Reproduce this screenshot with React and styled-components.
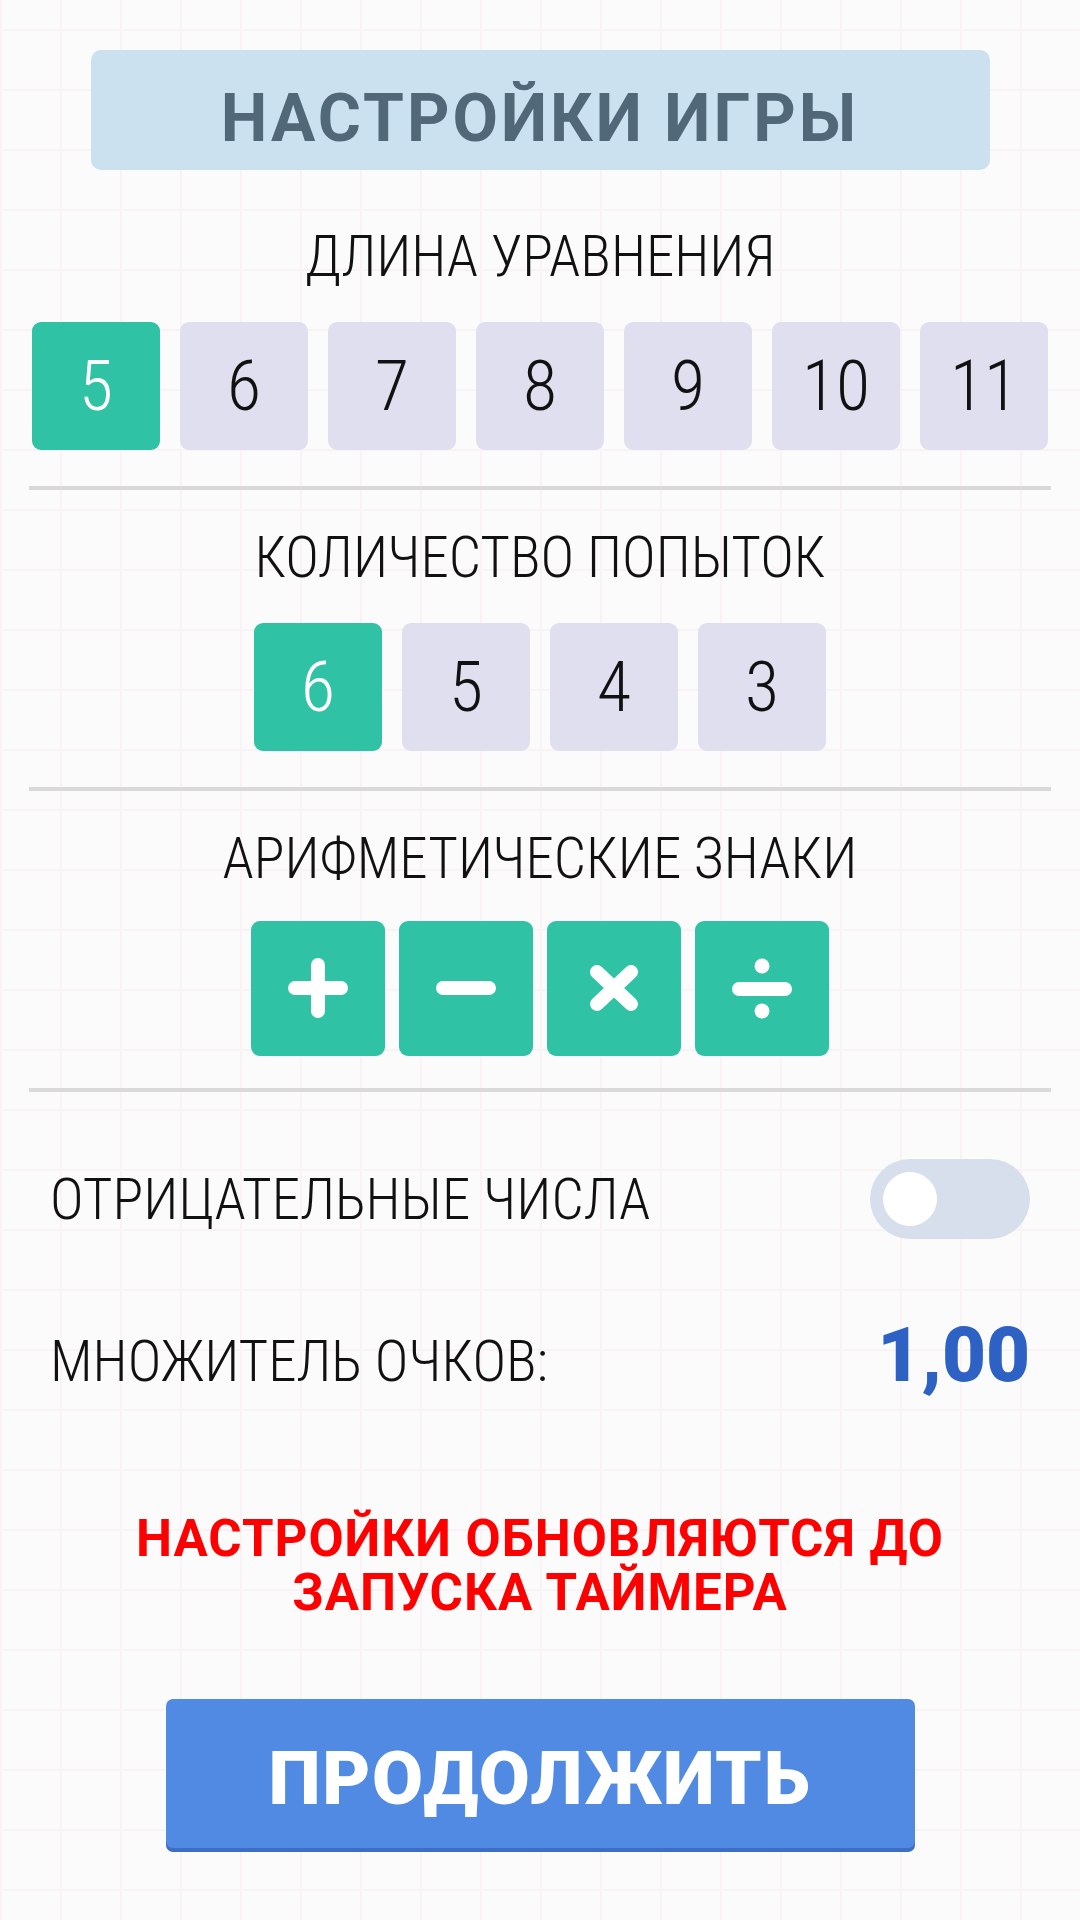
import React from "react";
import styled, { createGlobalStyle } from "styled-components";

const GlobalStyle = createGlobalStyle`
  html, body { margin: 0; padding: 0; }
  body {
    min-height: 1920px;
    background-color: #fcfbfc;
    background-image:
      linear-gradient(to right, #faf3f6 2px, transparent 2px),
      linear-gradient(to bottom, #faf3f6 2px, transparent 2px);
    background-size: 60px 60px;
    background-position: 0 0, 0 29px;
    font-family: "Roboto", "Noto Sans", sans-serif;
  }
`;

const Page = styled.div`
  width: 1080px;
  box-sizing: border-box;
  padding-top: 50px;
  display: flex;
  flex-direction: column;
`;

const TitleBox = styled.div`
  align-self: center;
  width: 899px;
  height: 120px;
  box-sizing: border-box;
  padding-top: 36px;
  background: #cbe1ef;
  border-radius: 10px;
  text-align: center;
  font-family: "Roboto", sans-serif;
  font-weight: 700;
  font-size: 66px;
  line-height: 66px;
  letter-spacing: 3px;
  color: #516879;
`;

const Section = styled.section`
  display: flex;
  flex-direction: column;
  align-items: center;
  padding-top: ${(p) => (p.$first ? "58px" : "39px")};
  padding-bottom: 30px;
`;

const Label = styled.div`
  font-family: "Roboto Condensed", "Roboto", sans-serif;
  font-stretch: 75%;
  font-weight: 300;
  font-size: 57px;
  line-height: 57px;
  color: #111;
  white-space: nowrap;
`;

const RowArea = styled.div`
  margin-top: 31px;
  height: 140px;
  display: flex;
  align-items: center;
  justify-content: center;
  gap: ${(p) => p.$gap}px;
`;

const NumButton = styled.button`
  width: 128px;
  height: 128px;
  border: none;
  padding: 0;
  border-radius: 9px;
  background: ${(p) => (p.$active ? "#30c2a5" : "#dfdff0")};
  color: ${(p) => (p.$active ? "#ffffff" : "#111")};
  font-family: "Roboto Condensed", "Roboto", sans-serif;
  font-stretch: 75%;
  font-weight: 300;
  font-size: 70px;
  line-height: 70px;
  display: flex;
  align-items: center;
  justify-content: center;
`;

const OpButton = styled.button`
  width: 134px;
  height: 135px;
  border: none;
  padding: 0;
  border-radius: 9px;
  background: #30c2a5;
  display: flex;
  align-items: center;
  justify-content: center;
`;

const Divider = styled.hr`
  margin: 0 29px;
  border: none;
  height: 4px;
  background: #d9d9d9;
`;

const SettingRow = styled.div`
  display: flex;
  justify-content: space-between;
  align-items: ${(p) => p.$align || "center"};
  padding: 0 50px 0 50px;
  margin-top: ${(p) => p.$mt}px;
`;

const Track = styled.div`
  width: 160px;
  height: 80px;
  box-sizing: border-box;
  border-radius: 40px;
  background: #d8dfec;
  display: flex;
  align-items: center;
  padding-left: 13px;
`;

const Knob = styled.div`
  width: 54px;
  height: 54px;
  border-radius: 50%;
  background: #ffffff;
`;

const Multiplier = styled.div`
  font-family: "Roboto", sans-serif;
  font-weight: 900;
  font-size: 76px;
  line-height: 76px;
  color: #2d62c4;
`;

const Warning = styled.div`
  margin-top: 119px;
  text-align: center;
  font-family: "Roboto", sans-serif;
  font-weight: 700;
  font-size: 51px;
  line-height: 54px;
  letter-spacing: 1px;
  color: #ff0000;
`;

const ContinueButton = styled.button`
  align-self: center;
  margin-top: 79px;
  width: 749px;
  height: 149px;
  border: none;
  border-radius: 7px;
  background: #508ae3;
  box-shadow: 0 4px 0 #3d6ec4;
  padding: 10px 0 0;
  display: flex;
  align-items: center;
  justify-content: center;
  font-family: "Roboto", sans-serif;
  font-weight: 900;
  font-size: 74px;
  line-height: 74px;
  letter-spacing: 1.5px;
  color: #ffffff;
`;

const Icon = ({ children }) => (
  <svg width="64" height="64" viewBox="0 0 64 64" fill="none" stroke="#fff" strokeWidth="14" strokeLinecap="round">
    {children}
  </svg>
);

const ops = [
  { key: "plus", el: (<><line x1="9" y1="32" x2="55" y2="32" /><line x1="32" y1="9" x2="32" y2="55" /></>) },
  { key: "minus", el: <line x1="9" y1="32" x2="55" y2="32" /> },
  { key: "times", el: (<><line x1="15" y1="16" x2="49" y2="48" /><line x1="49" y1="16" x2="15" y2="48" /></>) },
  {
    key: "div",
    el: (
      <>
        <line x1="9" y1="33" x2="55" y2="33" />
        <circle cx="32" cy="10" r="7.5" fill="#fff" stroke="none" />
        <circle cx="32" cy="55" r="7.5" fill="#fff" stroke="none" />
      </>
    ),
  },
];

export default function App() {
  const lengths = [5, 6, 7, 8, 9, 10, 11];
  const attempts = [6, 5, 4, 3];
  return (
    <Page>
      <GlobalStyle />
      <TitleBox>НАСТРОЙКИ ИГРЫ</TitleBox>

      <Section $first>
        <Label>ДЛИНА УРАВНЕНИЯ</Label>
        <RowArea $gap={20}>
          {lengths.map((n) => (
            <NumButton key={n} $active={n === 5}>{n}</NumButton>
          ))}
        </RowArea>
      </Section>
      <Divider />

      <Section>
        <Label>КОЛИЧЕСТВО ПОПЫТОК</Label>
        <RowArea $gap={20}>
          {attempts.map((n) => (
            <NumButton key={n} $active={n === 6}>{n}</NumButton>
          ))}
        </RowArea>
      </Section>
      <Divider />

      <Section>
        <Label>АРИФМЕТИЧЕСКИЕ ЗНАКИ</Label>
        <RowArea $gap={14}>
          {ops.map((o) => (
            <OpButton key={o.key}>
              <Icon>{o.el}</Icon>
            </OpButton>
          ))}
        </RowArea>
      </Section>
      <Divider />

      <SettingRow $mt={67}>
        <Label>ОТРИЦАТЕЛЬНЫЕ ЧИСЛА</Label>
        <Track>
          <Knob />
        </Track>
      </SettingRow>

      <SettingRow $mt={78} $align="baseline">
        <Label>МНОЖИТЕЛЬ ОЧКОВ:</Label>
        <Multiplier>1,00</Multiplier>
      </SettingRow>

      <Warning>
        НАСТРОЙКИ ОБНОВЛЯЮТСЯ ДО
        <br />
        ЗАПУСКА ТАЙМЕРА
      </Warning>

      <ContinueButton>ПРОДОЛЖИТЬ</ContinueButton>
    </Page>
  );
}
